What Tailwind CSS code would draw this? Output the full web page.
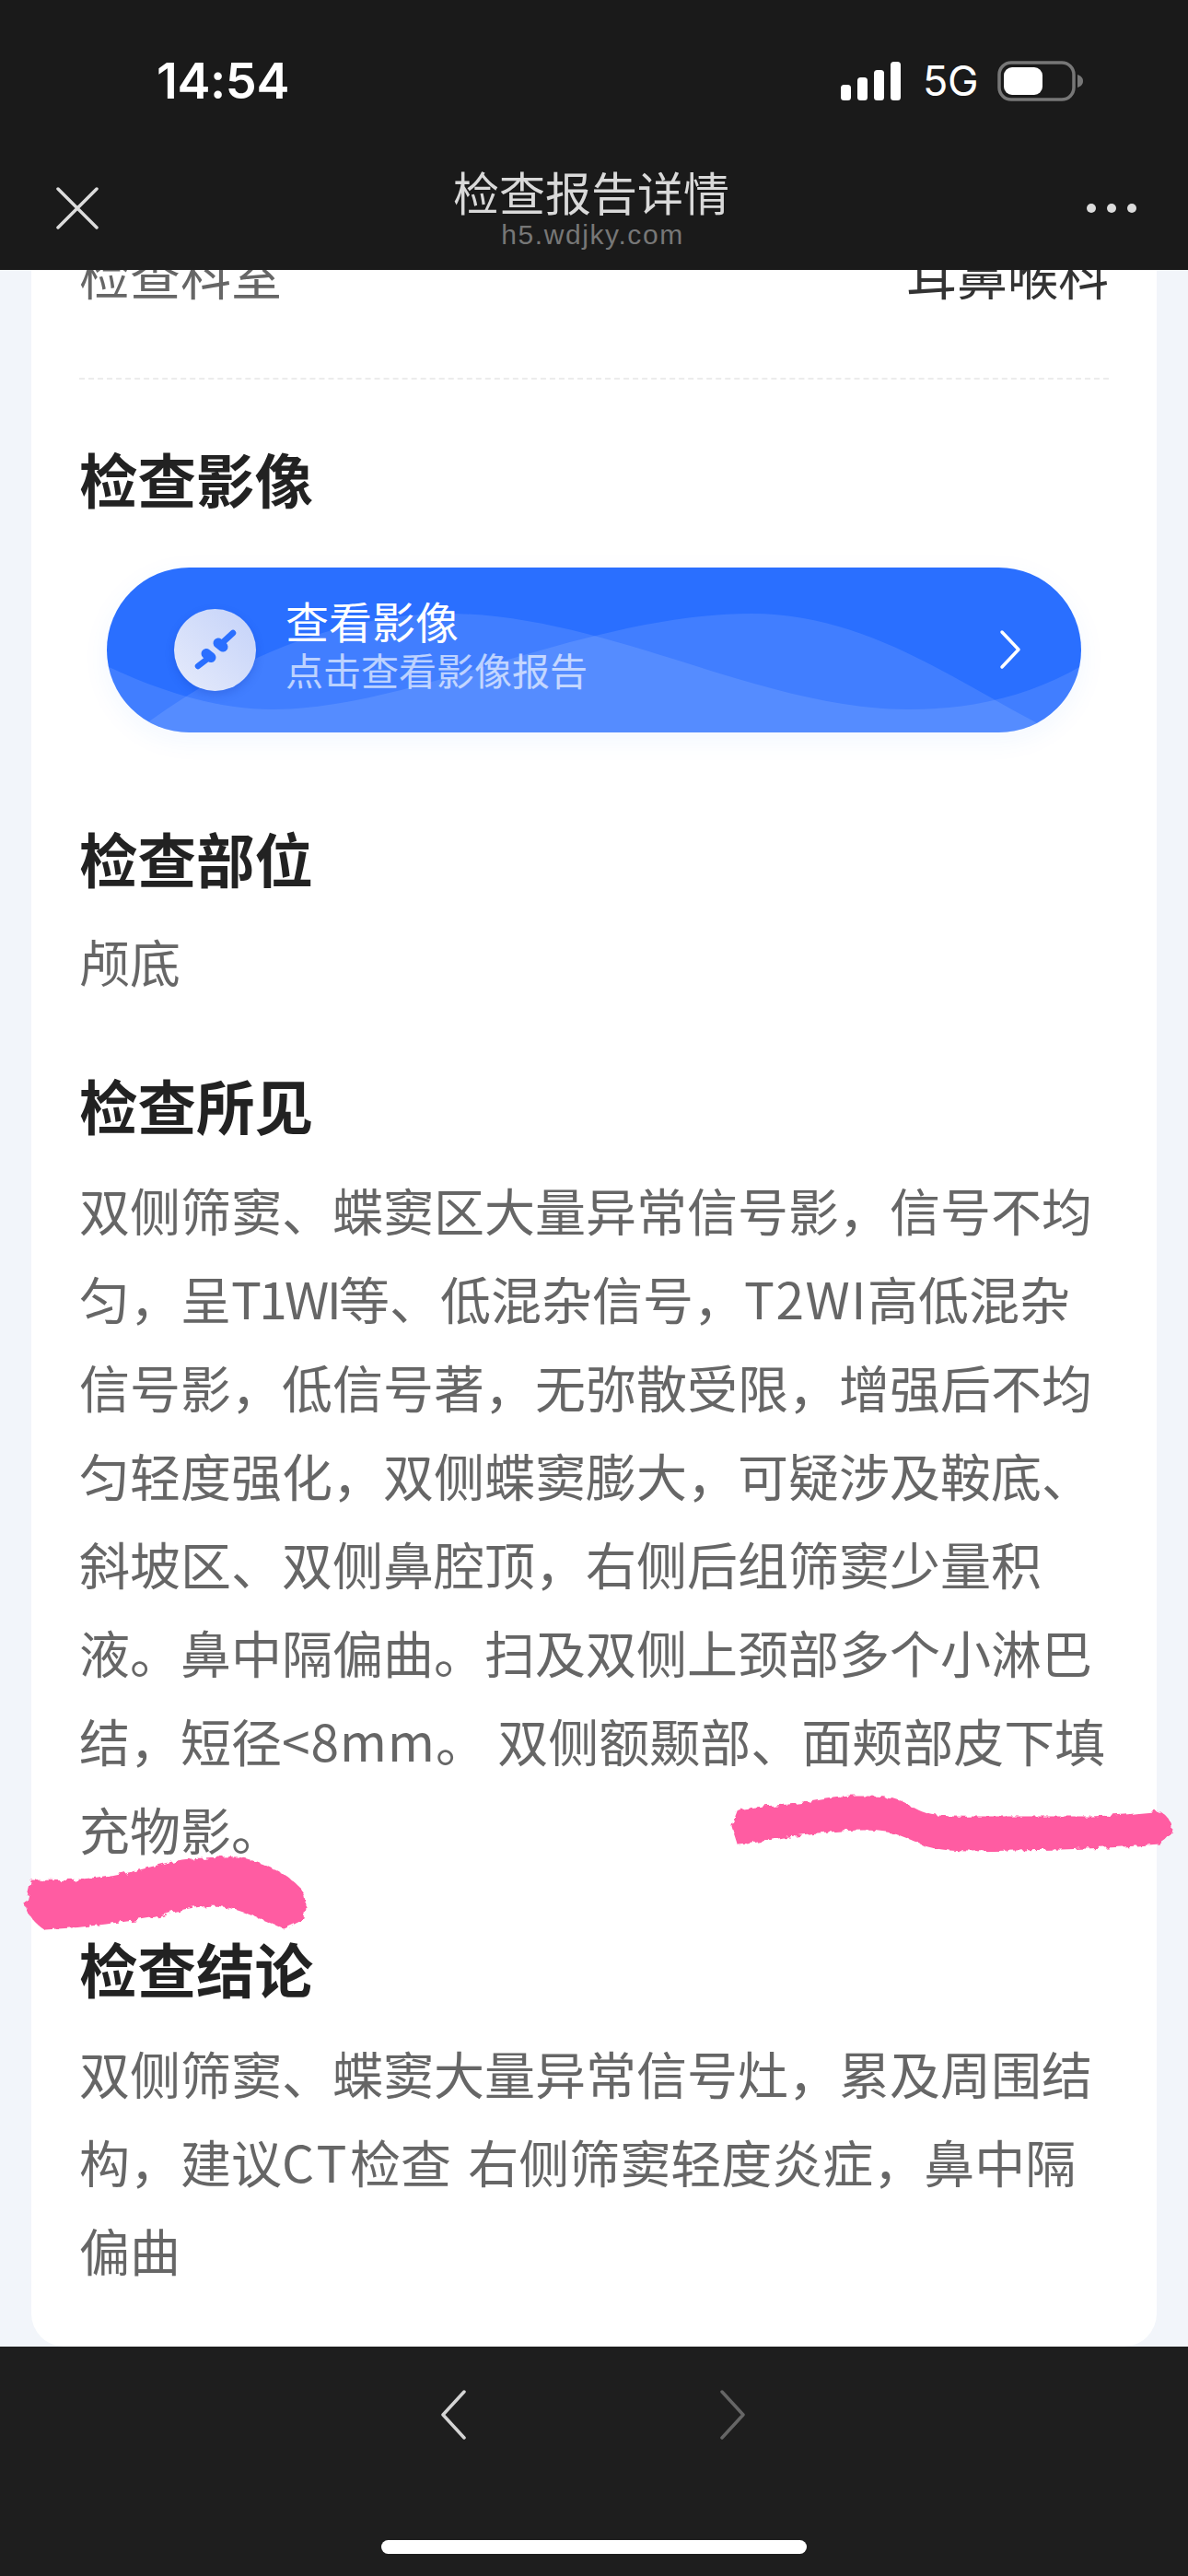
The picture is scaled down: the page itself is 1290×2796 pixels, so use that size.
<!DOCTYPE html>
<html lang="zh-CN">
<head>
    <meta charset="UTF-8">
    <meta name="viewport" content="width=device-width, initial-scale=1.0">
    <script src="https://cdn.jsdelivr.net/npm/@tailwindcss/browser@4"></script>
    <title>检查报告详情</title>
</head>
<body class="bg-[#f2f5fa] font-['Noto_Sans_CJK_SC','Noto_Sans',sans-serif]">
<div class="relative w-[1290px] h-[2796px] overflow-hidden flex flex-col">

    <!-- top bars -->
    <header class="relative z-10 h-[293px] shrink-0 bg-[#1a1a1a]">
        <div class="flex items-center justify-between pt-[58px] pl-[170px] pr-[113px] h-[118px]">
            <span class="text-[54px] leading-[60px] font-semibold text-white font-['Inter',sans-serif] tracking-[-0.4px]">14:54</span>
            <div class="flex items-center">
                <svg width="66" height="42" viewBox="0 0 66 42" fill="#fff">
                    <rect x="0" y="25" width="11" height="17" rx="3.5"/>
                    <rect x="18" y="17" width="11" height="25" rx="3.5"/>
                    <rect x="36" y="9" width="11" height="33" rx="3.5"/>
                    <rect x="54" y="0" width="11" height="42" rx="3.5"/>
                </svg>
                <span class="ml-[23px] text-[45px] leading-[44px] font-normal text-white font-['Inter',sans-serif] tracking-[-0.5px]">5G</span>
                <svg class="ml-[21px]" width="94" height="44" viewBox="0 0 94 44">
                    <rect x="2" y="2" width="81" height="40" rx="13" fill="none" stroke="#777" stroke-width="3.5"/>
                    <rect x="7" y="7" width="42" height="30" rx="9" fill="#fff"/>
                    <path d="M87 15c3 1 6 3 6 7s-3 6-6 7z" fill="#777"/>
                </svg>
            </div>
        </div>
        <div class="relative mt-[59px] flex flex-col items-center">
            <svg class="absolute left-[60px] top-[26px]" width="48" height="46" viewBox="0 0 48 46" fill="none" stroke="#dcdcdc" stroke-width="3.5" stroke-linecap="round">
                <path d="M3 2l42 42M45 2L3 44"/>
            </svg>
            <h1 class="text-[50px] leading-[60px] text-[#d9d9d9] -ml-[6px]">检查报告详情</h1>
            <p class="mt-[1px] -ml-[3px] text-[30px] leading-[34px] text-[#777] font-['Liberation_Sans',sans-serif] tracking-[1.6px]">h5.wdjky.com</p>
            <div class="absolute left-[1180px] top-[44px] flex gap-[12px]">
                <i class="block size-[10px] rounded-full bg-[#dcdcdc]"></i>
                <i class="block size-[10px] rounded-full bg-[#dcdcdc]"></i>
                <i class="block size-[10px] rounded-full bg-[#dcdcdc]"></i>
            </div>
        </div>
    </header>

    <!-- report card, scrolled under the header -->
    <main class="h-[2254px] shrink-0 overflow-hidden">
        <div class="mx-[34px] h-[2354px] -mt-[100px] pt-[63px] px-[52px] bg-white rounded-b-[36px]">
            <div class="flex justify-between h-[156px] text-[55px] leading-[80px] border-b-2 border-dashed border-[#ececec]">
                <span class="text-[#666]">检查科室</span>
                <span class="text-[#333]">耳鼻喉科</span>
            </div>

            <h2 class="mt-[66px] text-[63.5px] leading-[80px] font-semibold text-[#222]">检查影像</h2>

            <a class="relative block overflow-hidden mt-[58px] mx-[30px] h-[179px] rounded-[90px] bg-[#2a6fff] shadow-[0_8px_30px_rgba(42,111,255,0.06)]">
                <svg class="absolute inset-0" width="1058" height="179" viewBox="0 0 1058 179" fill="#fff" fill-opacity="0.11">
                    <path d="M0 107C60 135 120 154 180 154C330 154 520 50 700 50C830 50 930 130 1030 179H0Z"/>
                    <path d="M30 179C120 110 240 50 370 50C540 50 710 154 870 154C940 154 1000 140 1058 107V179Z"/>
                </svg>
                <div class="relative flex items-center h-full pl-[73px]">
                    <div class="flex items-center justify-center size-[89px] rounded-full bg-gradient-to-bl from-[#c4d2f9] to-[#e6ebfb] shadow-[0_4px_10px_rgba(20,60,180,0.25)]">
                        <svg width="60" height="60" viewBox="0 0 60 60" fill="none" stroke="#2a6fff" stroke-linecap="round">
                            <path d="M36 23L49 11" stroke-width="6.5"/>
                            <path d="M33 22l5 4" stroke-width="11"/>
                            <path d="M24 37L11 47" stroke-width="6.5"/>
                            <path d="M20 33.500l5 4" stroke-width="11"/>
                        </svg>
                    </div>
                    <div class="ml-[32px] -mt-[16px]">
                        <p class="text-[47px] leading-[56px] text-white">查看影像</p>
                        <p class="text-[41px] leading-[50px] text-white/65">点击查看影像报告</p>
                    </div>
                </div>
                <svg class="absolute left-[968px] top-[67px]" width="26" height="44" viewBox="0 0 26 44" fill="none" stroke="#fff" stroke-width="3.5" stroke-linecap="round" stroke-linejoin="round">
                    <path d="M4 3l18 19L4 41"/>
                </svg>
            </a>

            <h2 class="mt-[95px] text-[63.5px] leading-[80px] font-semibold text-[#222]">检查部位</h2>
            <p class="mt-[24px] text-[55px] leading-[97px] text-[#666]">颅底</p>

            <h2 class="mt-[67px] text-[63.5px] leading-[80px] font-semibold text-[#222]">检查所见</h2>
            <p class="mt-[26px] text-[55px] leading-[96px] text-[#666] whitespace-nowrap">
                双侧筛窦、蝶窦区大量异常信号影，信号不均<br>
                匀，呈<span class="tracking-[-2.7px]">T1WI</span>等、低混杂信号，<span class="tracking-[1.5px]">T2WI</span>高低混杂<br>
                信号影，低信号著，无弥散受限，增强后不均<br>
                匀轻度强化，双侧蝶窦膨大，可疑涉及鞍底、<br>
                斜坡区、双侧鼻腔顶，右侧后组筛窦少量积<br>
                液。鼻中隔偏曲。扫及双侧上颈部多个小淋巴<br>
                结，短径<span class="tracking-[1px]">&lt;8mm</span>。 双侧额颞部、面颊部皮下填<br>
                充物影。
            </p>

            <h2 class="mt-[63px] text-[63.5px] leading-[80px] font-semibold text-[#222]">检查结论</h2>
            <p class="mt-[26px] text-[55px] leading-[96px] text-[#666] whitespace-nowrap">
                双侧筛窦、蝶窦大量异常信号灶，累及周围结<br>
                构，建议<span class="tracking-[3.5px]">CT</span>检查<span class="tracking-[6px]"> </span>右侧筛窦轻度炎症，鼻中隔<br>
                偏曲
            </p>
        </div>
    </main>

    <!-- bottom toolbar -->
    <footer class="relative z-10 flex-1 bg-[#1e1e1e]">
        <div class="flex justify-center gap-[274px] pt-[47px] pr-[3px]">
            <svg width="29" height="54" viewBox="0 0 29 54" fill="none" stroke="#d4d4d4" stroke-width="3.5" stroke-linecap="round" stroke-linejoin="round">
                <path d="M26 2L3 27l23 25"/>
            </svg>
            <svg width="29" height="54" viewBox="0 0 29 54" fill="none" stroke="#666" stroke-width="3.5" stroke-linecap="round" stroke-linejoin="round">
                <path d="M3 2l23 25L3 52"/>
            </svg>
        </div>
        <div class="mx-auto mt-[109px] w-[462px] h-[15px] rounded-full bg-white"></div>
    </footer>

    <!-- marker strokes drawn over the screenshot -->
    <svg class="absolute inset-0 z-20 pointer-events-none" width="1290" height="2796" viewBox="0 0 1290 2796" fill="#ff5ca2" stroke="#ff5ca2" stroke-width="3" stroke-linejoin="round">
        <defs>
            <filter id="rough" x="-10%" y="-50%" width="120%" height="200%">
                <feTurbulence type="fractalNoise" baseFrequency="0.14" numOctaves="2" seed="4"/>
                <feDisplacementMap in="SourceGraphic" scale="7"/>
            </filter>
        </defs>
        <g filter="url(#rough)">
            <path d="M796 1982L802 1966C820 1962 838 1961 856 1960C880 1958 905 1951 930 1951C950 1951 965 1950 979 1957C992 1963 1005 1972 1020 1972C1040 1974 1055 1973 1070 1973L1176 1973C1205 1973 1235 1970 1259 1967C1266 1972 1271 1977 1271 1983C1271 1990 1266 1996 1259 2000C1225 2003 1190 2005 1152 2006L1053 2008C1035 2008 1018 2006 1004 2002C990 1996 978 1989 963 1987C945 1984 930 1985 913 1986C895 1987 875 1989 856 1992C838 1995 820 1999 802 2001Z"/>
            <path d="M29 2067L35 2042C55 2042 72 2043 90 2042C112 2040 135 2036 156 2030C178 2024 200 2018 222 2018C240 2017 258 2015 271 2020C290 2026 312 2036 325 2050C329 2056 330 2061 330 2067C330 2073 330 2078 327 2083C322 2086 315 2089 308 2092C300 2088 290 2084 280 2080C265 2074 248 2067 230 2067C210 2068 192 2072 173 2078C153 2083 135 2084 115 2087C93 2090 71 2092 49 2093C38 2086 31 2077 29 2067Z"/>
        </g>
    </svg>
</div>
</body>
</html>
